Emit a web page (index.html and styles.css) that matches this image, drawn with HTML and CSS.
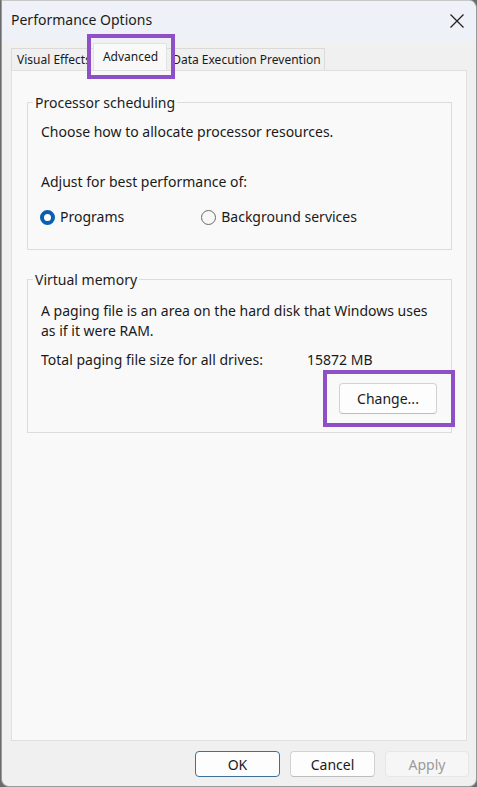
FILE: index.html
```html
<!DOCTYPE html>
<html>
<head>
<meta charset="utf-8">
<link rel="stylesheet" href="styles.css">
</head>
<body>
<div class="window">
  <div class="titlebar">
    <span class="title">Performance Options</span>
    <svg class="close" width="16" height="16" viewBox="0 0 16 16"><path d="M1.5 1.5L14.5 14.5M14.5 1.5L1.5 14.5" stroke="#222" stroke-width="1.3" fill="none"/></svg>
  </div>
  <div class="tabs">
    <div class="tab first">Visual Effects</div>
    <div class="tab active">Advanced</div>
    <div class="tab last">Data Execution Prevention</div>
  </div>
  <div class="panel">
    <fieldset class="group group-proc">
      <legend>Processor scheduling</legend>
      <p class="line">Choose how to allocate processor resources.</p>
      <p class="line adjust">Adjust for best performance of:</p>
      <div class="radios">
        <label class="radio"><span class="dot on"></span>Programs</label>
        <label class="radio r2"><span class="dot"></span>Background services</label>
      </div>
    </fieldset>
    <fieldset class="group group-vm">
      <legend>Virtual memory</legend>
      <p class="line">A paging file is an area on the hard disk that Windows uses<br>as if it were RAM.</p>
      <div class="total"><span class="tlabel">Total paging file size for all drives:</span><span>15872 MB</span></div>
      <div class="changerow"><button class="btn change">Change...</button></div>
    </fieldset>
  </div>
  <div class="footer">
    <button class="btn ok">OK</button>
    <button class="btn">Cancel</button>
    <button class="btn disabled">Apply</button>
  </div>
  <div class="mark mark-tab"></div>
  <div class="mark mark-change"></div>
</div>
</body>
</html>
```
FILE: styles.css
```css
* { box-sizing: border-box; }
html, body { margin: 0; padding: 0; }
body {
  width: 477px;
  height: 787px;
  background: #6b6b6b;
  font-family: "Noto Sans", "Open Sans", sans-serif;
  color: #1a1a1a;
  overflow: hidden;
}
.window {
  position: relative;
  width: 476px;
  height: 787px;
  margin-left: 1px;
  background: #f0f0f0;
  border: 1px solid #9a9a9a;
  border-top-color: #c8c8c8;
  border-radius: 0 8px 8px 8px;
  display: flex;
  flex-direction: column;
  overflow: hidden;
}
.titlebar {
  height: 40px;
  flex: none;
  background: #eef1f7;
  display: flex;
  align-items: center;
  justify-content: space-between;
  padding: 0 11px 4px 9px;
}
.title {
  font-size: 14px;
  color: #1c1c1c;
}
.close { margin-top: 3px; }
.tabs {
  display: flex;
  align-items: flex-end;
  height: 29px;
  padding-left: 9px;
  flex: none;
}
.tab {
  height: 22px;
  font-size: 12px;
  line-height: 21px;
  background: #f0f0f0;
  border: 1px solid #dadada;
  border-bottom: none;
  color: #1a1a1a;
  white-space: nowrap;
}
.tab.first { padding: 0 2px 0 5px; }
.tab.last { padding: 0 3px 0 5px; }
.tab.active {
  height: 27px;
  background: #f9f9f9;
  line-height: 26px;
  padding: 0 8px 0 9px;
  margin: 0 -1px;
  position: relative;
  z-index: 1;
  border-color: #e2e2e2;
}
.panel {
  flex: none;
  height: 671px;
  margin: 0 9px;
  background: #f9f9f9;
  border: 1px solid #e0e0e0;
  padding: 22px 14px 0 15px;
}
.group {
  margin: 0;
  border: 1px solid #dcdcdc;
  padding: 0 13px 0 13px;
  min-width: 0;
}
.group legend {
  font-size: 14px;
  padding: 0 2px;
  margin-left: -8px;
  color: #1c1c1c;
}
.group-proc { height: 157px; }
.group-vm { height: 163px; margin-top: 20px; }
.line {
  margin: 0;
  font-size: 14px;
  line-height: 20px;
}
.group-proc .line:first-of-type { margin-top: 10px; }
.adjust { margin-top: 30px !important; }
.radios {
  display: flex;
  margin-top: 15px;
  font-size: 14px;
  line-height: 20px;
}
.radio { display: flex; align-items: center; }
.r2 { margin-left: 78px; }
.dot {
  width: 15px; height: 15px;
  margin-left: -1px;
  border-radius: 50%;
  border: 1px solid #6a6a6a;
  background: #f7f7f7;
  margin-right: 5px;
}
.dot.on {
  border: 4px solid #0a5fb0;
  background: #fff;
}
.group-vm .line { margin-top: 12px; }
.total {
  display: flex;
  font-size: 14px;
  line-height: 20px;
  margin-top: 9px;
}
.tlabel { width: 266px; }
.changerow {
  display: flex;
  justify-content: flex-end;
  margin-top: 13px;
  padding-right: 1px;
}
.btn {
  font-family: inherit;
  font-size: 14px;
  color: #1a1a1a;
  background: #fdfdfd;
  border: 1px solid #d2d2d2;
  border-bottom-color: #bdbdbd;
  border-radius: 4px;
  height: 26px;
  width: 85px;
  padding: 0;
}
.btn.change { width: 98px; height: 31px; }
.footer {
  flex: 1;
  display: flex;
  justify-content: flex-end;
  align-items: flex-end;
  gap: 10px;
  padding: 0 7px 9px 0;
}
.btn.ok { border: 1px solid #3d7098; }
.btn.disabled { color: #9b9b9b; background: #f6f6f6; border-color: #e6e6e6; width: 84px; }
.mark {
  position: absolute;
  border: 4px solid #8e4fc7;
}
.mark-tab { left: 85px; top: 33px; width: 88px; height: 45px; }
.mark-change { left: 321px; top: 369px; width: 132px; height: 57px; }
```
